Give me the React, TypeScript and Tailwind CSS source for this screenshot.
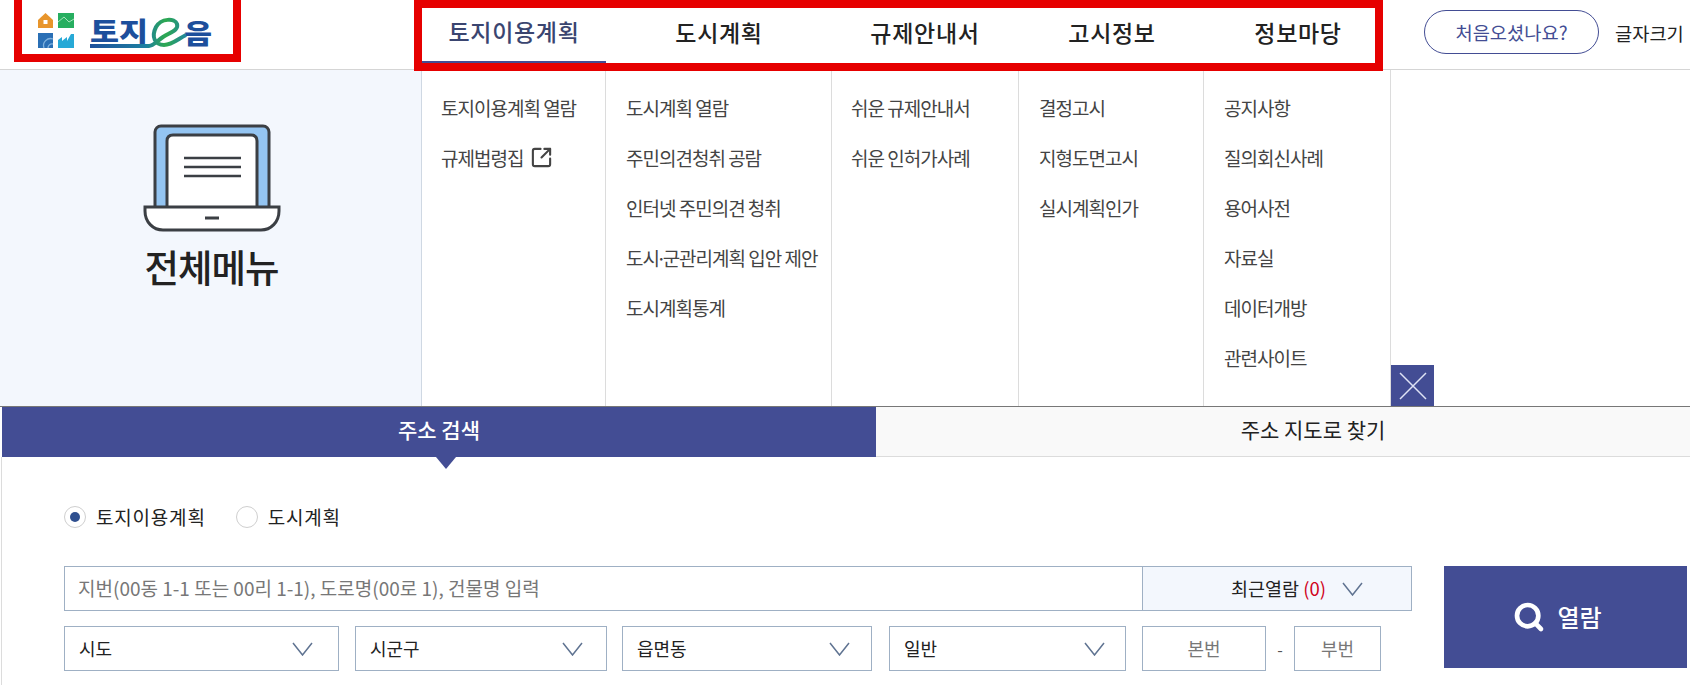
import React from 'react';
import { Search, SquareArrowOutUpRight } from 'lucide-react';

const NAV = [
    { label: '토지이용계획', width: 'w-[184px]', active: true },
    { label: '도시계획', width: 'w-[226px]' },
    { label: '규제안내서', width: 'w-[186px]' },
    { label: '고시정보', width: 'w-[188px]' },
    { label: '정보마당', width: 'w-[184px]' },
];

const MENU = [
    { width: 'w-[184px] pl-[19px]', items: ['토지이용계획 열람', '규제법령집'] },
    { width: 'w-[226px] pl-[20px]', items: ['도시계획 열람', '주민의견청취 공람', '인터넷 주민의견 청취', '도시·군관리계획 입안 제안', '도시계획통계'] },
    { width: 'w-[187px] pl-[19px]', items: ['쉬운 규제안내서', '쉬운 인허가사례'] },
    { width: 'w-[185px] pl-[20px]', items: ['결정고시', '지형도면고시', '실시계획인가'] },
    { width: 'w-[187px] pl-[20px]', items: ['공지사항', '질의회신사례', '용어사전', '자료실', '데이터개방', '관련사이트'] },
];

const FONT = "font-['Noto_Sans_CJK_KR','Noto_Sans',sans-serif]";

function Logo() {
    return (
        <svg width="172" height="37" viewBox="0 0 172 37" className="overflow-visible">
            <defs>
                <linearGradient id="swoosh" x1="52" y1="0" x2="153" y2="0" gradientUnits="userSpaceOnUse">
                    <stop offset="0" stopColor="#1d4f9c" />
                    <stop offset="0.55" stopColor="#1d7fa0" />
                    <stop offset="0.75" stopColor="#2da94f" />
                    <stop offset="1" stopColor="#1d7fb0" />
                </linearGradient>
            </defs>
            <path d="M0 7 L7.500 0 L15 7 V15 H0 Z" fill="#e8952b" />
            <rect x="5.500" y="7" width="4" height="4" fill="#fff" />
            <rect x="20" y="0" width="16" height="15" fill="#27ae60" />
            <path d="M20 9 L26 4 L31 9 L36 6" stroke="#a6e3bb" strokeWidth="1" fill="none" />
            <rect x="0" y="20" width="15" height="15" fill="#2a6fb5" />
            <path d="M6 35 A7 7 0 0 1 15 26 M10 35 A4 4 0 0 1 15 31" stroke="#7fb2de" strokeWidth="1.300" fill="none" />
            <path d="M20 35 V27 L24 24 V28 L29 24 V28 L33 21 H36 V35 Z" fill="#27a9d6" />
            <text x="52" y="29" fontSize="27" fontWeight="900" fill="#1d4f9c" textLength="58" lengthAdjust="spacingAndGlyphs">토지</text>
            <text x="146" y="31" fontSize="27" fontWeight="900" fill="#1d4f9c" textLength="28" lengthAdjust="spacingAndGlyphs">음</text>
            <path d="M52 33 H111 C115 33 119 28 125 24 C133 19 141 17 139 11 C137 5 123 5 118 14 C113 24 117 32 126 32 C134 32 140 26 148 22" stroke="url(#swoosh)" strokeWidth="4" fill="none" />
        </svg>
    );
}

function Laptop() {
    return (
        <svg width="138" height="108" viewBox="0 0 138 108" fill="none">
            <rect x="12" y="2" width="114" height="86" rx="6" fill="#94c5f2" stroke="#3b3f44" strokeWidth="3" />
            <path d="M24 88 V17 Q24 11 30 11 H108 Q114 11 114 17 V88 Z" fill="#fff" stroke="#3b3f44" strokeWidth="3" />
            <path d="M41 34 H98 M41 43 H98 M41 52 H98" stroke="#3b3f44" strokeWidth="2.500" />
            <path d="M2 83 H136 V87 C136 98 128 106 118 106 H20 C10 106 2 98 2 87 Z" fill="#fff" stroke="#3b3f44" strokeWidth="3" />
            <path d="M62 94 H76" stroke="#3b3f44" strokeWidth="3" />
        </svg>
    );
}

function Chevron() {
    return (
        <svg width="21" height="14" viewBox="0 0 21 14" fill="none" stroke="#5f7391" strokeWidth="1.500">
            <path d="M1 1 L10.500 13 L20 1" />
        </svg>
    );
}

function SelectBox({ label, className }: { label: string; className: string }) {
    return (
        <div className={`${className} h-[45px] border border-[#9fb0c4] flex items-center justify-between pl-[14px] text-[18px] text-[#222]`}>
            <span>{label}</span>
            <Chevron />
        </div>
    );
}

function MenuItem({ item }: { item: string }) {
    const parts = item.split('·');
    return (
        <li className="h-[25px] leading-[25px] text-[19px] tracking-[-1px] text-[#444] whitespace-nowrap flex items-center">
            {parts.length > 1 ? (
                <span>{parts[0]}<span className="-mx-[3px]">·</span>{parts[1]}</span>
            ) : item}
            {item === '규제법령집' && <SquareArrowOutUpRight className="ml-[7px] w-[23px] h-[23px]" strokeWidth={2.2} />}
        </li>
    );
}

export default function App() {
    return (
        <div className={`${FONT} w-[1690px] h-[685px] overflow-hidden bg-white`}>
            {/* Top bar */}
            <header className="h-[70px] border-b border-[#d5d5d5] flex items-start">
                <div className="ml-[14px] w-[227px] h-[62px] border-[8px] border-t-0 border-[#e60000] flex items-center pl-[16px] pt-[9px]">
                    <Logo />
                </div>
                <nav className="relative z-10 ml-[173px] w-[969px] h-[71px] border-[8px] border-[#e60000] flex bg-white">
                    {NAV.map((n) => (
                        <div key={n.label} className={`${n.width} shrink-0 h-[55px] pb-[6px] flex items-center justify-center text-[23px] tracking-[0.7px] font-medium ${n.active ? 'border-b-2 border-[#434d94] text-[#3a4570]' : 'text-[#222]'}`}>
                            {n.label}
                        </div>
                    ))}
                </nav>
                <button className="ml-[41px] mt-[10px] w-[175px] h-[44px] rounded-full border border-[#434d94] text-[#434d94] text-[18.7px]">처음오셨나요?</button>
                <span className="ml-[16px] mt-[20px] text-[18.7px] leading-[26px] text-[#222] whitespace-nowrap">글자크기</span>
            </header>

            {/* Full menu */}
            <section className="h-[337px] flex border-b border-[#777]">
                <div className="w-[422px] bg-[#f3f7fd] border-r border-[#cfd8e3] flex flex-col items-center pt-[54px] pl-[2px]">
                    <Laptop />
                    <div className="mt-[12px] text-[37.5px] leading-[44px] font-medium text-[#222] tracking-[-1px]">전체메뉴</div>
                </div>
                {MENU.map((col) => (
                    <ul key={col.items[0]} className={`${col.width} border-r border-[#dcdcdc] pt-[25px] flex flex-col gap-[25px]`}>
                        {col.items.map((item) => (
                            <MenuItem key={item} item={item} />
                        ))}
                    </ul>
                ))}
                <div className="self-end w-[43px] h-[41px] bg-[#434d94] flex items-center justify-center">
                    <svg width="30" height="30" viewBox="0 0 30 30" stroke="#dfe3f5" strokeWidth="1.500">
                        <path d="M2 2 L28 28 M28 2 L2 28" />
                    </svg>
                </div>
            </section>

            {/* Tabs */}
            <div className="ml-[2px] flex h-[50px]">
                <div className="relative w-[874px] pb-[4px] bg-[#434d94] text-white text-[21px] font-medium flex items-center justify-center">
                    주소 검색
                    <span className="absolute left-[434px] top-[50px] w-0 h-0 border-x-[10px] border-x-transparent border-t-[12px] border-t-[#434d94]" />
                </div>
                <div className="flex-1 pl-[60px] pb-[4px] bg-[#f9f9f9] border-b border-[#dcdcdc] text-[21px] text-[#222] flex items-center justify-center">주소 지도로 찾기</div>
            </div>

            {/* Search form */}
            <div className="ml-[1px] border-l border-[#dcdcdc] h-[228px] pl-[62px] pt-[49px]">
                <div className="flex items-center h-[22px] text-[19px] tracking-[0.8px] text-[#222]">
                    <span className="w-[22px] h-[22px] rounded-full border border-[#cfcfcf] flex items-center justify-center">
                        <span className="w-[10px] h-[10px] rounded-full bg-[#2f4f8f]" />
                    </span>
                    <span className="ml-[10px]">토지이용계획</span>
                    <span className="ml-[30px] w-[22px] h-[22px] rounded-full border border-[#cfcfcf]" />
                    <span className="ml-[10px]">도시계획</span>
                </div>
                <div className="mt-[38px] flex gap-[32px]">
                    <div className="flex flex-col gap-[15px]">
                        <div className="w-[1348px] h-[45px] border border-[#9fb0c4] flex">
                            <div className="flex-1 flex items-center pl-[13px] text-[19px] text-[#777]">지번(00동 1-1 또는 00리 1-1), 도로명(00로 1), 건물명 입력</div>
                            <div className="w-[269px] bg-[#f3f7fd] border-l border-[#9fb0c4] flex items-center justify-end pr-[48px] gap-[16px] text-[18.5px] text-[#222]">
                                <span>최근열람 <span className="text-[#d0021b]">(0)</span></span>
                                <Chevron />
                            </div>
                        </div>
                        <div className="flex items-center">
                            <SelectBox label="시도" className="w-[275px] pr-[25px]" />
                            <div className="w-[16px]" />
                            <SelectBox label="시군구" className="w-[252px] pr-[23px]" />
                            <div className="w-[15px]" />
                            <SelectBox label="읍면동" className="w-[250px] pr-[21px]" />
                            <div className="w-[17px]" />
                            <SelectBox label="일반" className="w-[237px] pr-[20px]" />
                            <div className="w-[16px]" />
                            <div className="w-[124px] h-[45px] border border-[#9fb0c4] flex items-center justify-center text-[18px] text-[#777]">본번</div>
                            <div className="w-[28px] text-center text-[#555]">-</div>
                            <div className="w-[87px] h-[45px] border border-[#9fb0c4] flex items-center justify-center text-[18px] text-[#777]">부번</div>
                        </div>
                    </div>
                    <button className="w-[243px] h-[102px] pr-[16px] bg-[#434d94] text-white text-[24px] font-medium flex items-center justify-center gap-[12px]">
                        <Search className="w-[32px] h-[32px]" strokeWidth={3.5} />
                        열람
                    </button>
                </div>
            </div>
        </div>
    );
}
